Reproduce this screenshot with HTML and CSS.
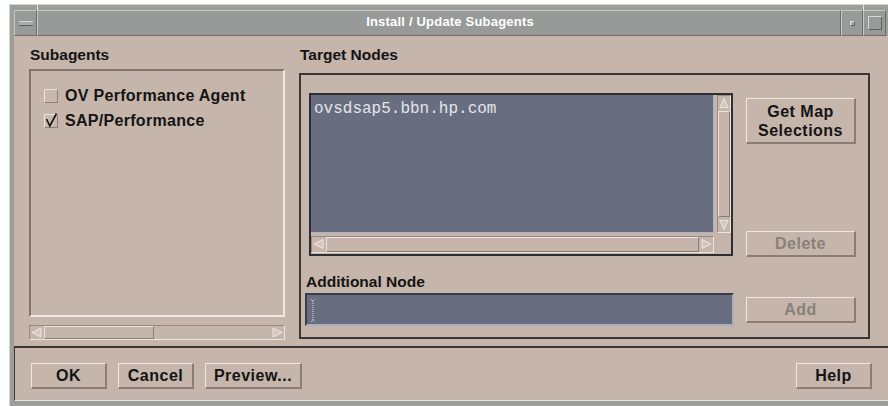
FILE: index.html
```html
<!DOCTYPE html>
<html lang="en">
<head>
<meta charset="utf-8">
<title>Install / Update Subagents</title>
<link rel="stylesheet" href="styles.css">
</head>
<body>
<div class="window">
  <span class="notch notch-tl"></span>
  <span class="notch notch-tr"></span>
  <div class="titlebar">
    <div class="tb-sec tb-menu"><span class="dash"></span></div>
    <div class="tb-sec tb-title">Install / Update Subagents</div>
    <div class="tb-sec tb-min"><span class="dot"></span></div>
    <div class="tb-sec tb-max"><span class="sq"></span></div>
  </div>
  <div class="client">
    <div class="content">
      <div class="col-left">
        <div class="label">Subagents</div>
        <div class="checklist">
          <div class="check-row"><span class="cb"></span><span>OV Performance Agent</span></div>
          <div class="check-row"><span class="cb"><svg class="tick" width="14" height="14" viewBox="0 0 14 14"><polyline points="2.5,5 5.8,12 12.5,-0.5" fill="none" stroke="#141414" stroke-width="1.6"/></svg></span><span>SAP/Performance</span></div>
        </div>
        <div class="hscroll">
          <span class="arrow"><svg width="13" height="13" viewBox="0 0 13 13"><polygon points="2,6.5 11,2 11,11" fill="#d3c7c0" stroke="#efe8e4" stroke-width="1"/></svg></span>
          <span class="thumb thumb-short"></span>
          <span class="trough"></span>
          <span class="arrow"><svg width="13" height="13" viewBox="0 0 13 13"><polygon points="11,6.5 2,2 2,11" fill="#d3c7c0" stroke="#efe8e4" stroke-width="1"/></svg></span>
        </div>
      </div>
      <div class="col-right">
        <div class="label">Target Nodes</div>
        <div class="group">
          <div class="g-main">
            <div class="scrolled">
              <div class="list-view"><div class="list-text">ovsdsap5.bbn.hp.com</div></div>
              <div class="vscroll">
                <span class="arrow"><svg width="13" height="14" viewBox="0 0 13 14"><polygon points="6.5,2 11,12 2,12" fill="#d3c7c0" stroke="#efe8e4" stroke-width="1"/></svg></span>
                <span class="thumb thumb-fill"></span>
                <span class="arrow"><svg width="13" height="14" viewBox="0 0 13 14"><polygon points="6.5,12 11,2 2,2" fill="#d3c7c0" stroke="#efe8e4" stroke-width="1"/></svg></span>
              </div>
              <div class="hscroll hscroll-list">
                <span class="arrow"><svg width="13" height="14" viewBox="0 0 13 14"><polygon points="2,7 11,2.5 11,11.5" fill="#d3c7c0" stroke="#efe8e4" stroke-width="1"/></svg></span>
                <span class="thumb thumb-fill"></span>
                <span class="arrow"><svg width="13" height="14" viewBox="0 0 13 14"><polygon points="11,7 2,2.5 2,11.5" fill="#d3c7c0" stroke="#efe8e4" stroke-width="1"/></svg></span>
              </div>
            </div>
            <div class="label sub-label">Additional Node</div>
            <div class="field">
              <svg class="ibeam" width="6" height="25" viewBox="0 0 6 25"><path d="M1 1 L3 3 L5 1 M3 3 V22 M1 24 L3 22 L5 24" fill="none" stroke="#e6e8ee" stroke-width="1" stroke-dasharray="1 1"/></svg>
            </div>
          </div>
          <div class="g-side">
            <button class="btn btn-map">Get Map<br>Selections</button>
            <button class="btn btn-delete" disabled>Delete</button>
            <button class="btn btn-add" disabled>Add</button>
          </div>
        </div>
      </div>
    </div>
    <div class="actions">
      <button class="btn btn-std">OK</button>
      <button class="btn btn-std">Cancel</button>
      <button class="btn btn-preview">Preview...</button>
      <button class="btn btn-std btn-help">Help</button>
    </div>
  </div>
</div>
</body>
</html>
```

FILE: styles.css
```css
html, body {
  margin: 0;
  padding: 0;
}

body {
  width: 888px;
  height: 406px;
  overflow: hidden;
  background: #ffffff;
  font-family: "Liberation Sans", Arial, sans-serif;
  color: #141414;
}

/* window manager frame */
.window {
  position: relative;
  margin: 4px 0 0 9px;
  width: 879px;
  height: 402px;
  box-sizing: border-box;
  background: #9c9e9c;
  border-top: 1px solid #d2d4d2;
  border-left: 1px solid #d2d4d2;
  padding: 5px 0 0 4px;
}

/* resize-handle notches in the frame */
.notch {
  position: absolute;
  top: -1px;
  width: 1px;
  height: 6px;
  background: #e2e4e2;
}
.notch-tl { left: 27px; }
.notch-tr { left: 853px; }

.titlebar {
  display: flex;
  height: 26px;
  margin-right: 2px;
}

.tb-sec {
  box-sizing: border-box;
  background: #979a98;
  border: 1px solid;
  border-color: #c6c8c6 #6c6e6c #6c6e6c #c6c8c6;
  display: flex;
  align-items: center;
  justify-content: center;
}

.tb-menu { width: 23px; }
.tb-min { width: 22px; }
.tb-max { width: 23px; }

.tb-title {
  flex: 1;
  color: #ffffff;
  font-weight: bold;
  font-size: 13px;
  letter-spacing: 0.2px;
  padding-left: 22px;
  padding-bottom: 3px;
}

.dash {
  width: 14px;
  height: 3px;
  background: #a9aba9;
  border-top: 1px solid #d6d8d6;
  border-bottom: 1px solid #5e605e;
}

.dot {
  width: 3px;
  height: 3px;
  background: #a9aba9;
  border: 1px solid;
  border-color: #dcdedc #5e605e #5e605e #dcdedc;
}

.sq {
  width: 12px;
  height: 12px;
  border: 1px solid;
  border-color: #d6d8d6 #5e605e #5e605e #d6d8d6;
}

/* dialog client area */
.client {
  height: 365px;
  background: #c5b5ab;
  display: flex;
  flex-direction: column;
}

.content {
  display: flex;
  gap: 14px;
  height: 310px;
  box-sizing: border-box;
  padding: 10px 18px 0 15px;
}

.label {
  font-weight: bold;
  font-size: 15.5px;
  line-height: 18px;
  height: 18px;
  padding-left: 1px;
}

.col-left {
  width: 256px;
  display: flex;
  flex-direction: column;
}

.col-right {
  width: 571px;
  display: flex;
  flex-direction: column;
}

.checklist {
  margin-top: 5px;
  height: 248px;
  box-sizing: border-box;
  border: 2px solid;
  border-color: #7f736c #efe7e2 #efe7e2 #7f736c;
  padding: 12px 0 0 13px;
}

.check-row {
  display: flex;
  align-items: center;
  gap: 7px;
  height: 25px;
  font-size: 16px;
  letter-spacing: 0.3px;
  font-weight: bold;
}

.cb {
  position: relative;
  width: 14px;
  height: 14px;
  box-sizing: border-box;
  border: 1px solid;
  border-color: #ebe3de #8d8079 #8d8079 #ebe3de;
  background: #c7b8ae;
}

.tick {
  position: absolute;
  left: -1px;
  top: -1px;
  overflow: visible;
}

/* scrollbars */
.hscroll {
  margin-top: 8px;
  height: 15px;
  display: flex;
  box-sizing: border-box;
  border: 1px solid;
  border-color: #978a82 #ebe3de #ebe3de #978a82;
  padding: 0;
}

.arrow {
  display: flex;
  flex: none;
}

.thumb {
  box-sizing: border-box;
  border: 1px solid;
  border-color: #ede5e0 #8a7d76 #8a7d76 #ede5e0;
  background: #c5b5ab;
  margin-left: 1px;
}

.thumb-short { width: 110px; }
.thumb-fill { flex: 1; margin-right: 1px; }
.trough { flex: 1; }

/* Target Nodes group */
.group {
  margin-top: 9px;
  height: 266px;
  box-sizing: border-box;
  border: 2px solid #3c3734;
  padding: 18px 12px 0 4px;
  display: grid;
  grid-template-columns: 429px 110px;
  column-gap: 12px;
}

.g-main {
  display: flex;
  flex-direction: column;
}

.scrolled {
  margin-left: 4px;
  width: 424px;
  height: 163px;
  box-sizing: border-box;
  border: 2px solid #2f2e33;
  display: grid;
  grid-template-columns: 403px 14px;
  grid-template-rows: 138px 17px;
  column-gap: 3px;
  row-gap: 3px;
}

.list-view {
  background: #686e80;
  border-right: 1px solid #aeb2bf;
  border-bottom: 1px solid #aeb2bf;
}

.list-text {
  font-family: "Liberation Mono", "Courier New", monospace;
  font-size: 16px;
  line-height: 18px;
  color: #e4e5e9;
  padding: 5px 0 0 3px;
}

.vscroll {
  display: flex;
  flex-direction: column;
  box-sizing: border-box;
  border: 1px solid;
  border-color: #978a82 #ebe3de #ebe3de #978a82;
}

.vscroll .thumb {
  margin: 1px 0;
}

.hscroll-list {
  margin-top: 0;
  height: 17px;
  grid-column: 1;
}

.sub-label {
  margin-top: 17px;
}

.field {
  margin-top: 2px;
  height: 33px;
  box-sizing: border-box;
  background: #686e80;
  border: 2px solid;
  border-color: #3a3d48 #a9aebb #a9aebb #3a3d48;
  padding: 3px 0 0 3px;
}

.ibeam {
  display: block;
}

.g-side {
  display: flex;
  flex-direction: column;
}

/* push buttons */
.btn {
  box-sizing: border-box;
  height: 26px;
  margin: 0;
  padding: 0;
  background: #c5b5ab;
  border-style: solid;
  border-width: 1px 2px 2px 1px;
  border-color: #efe7e2 #8a7d76 #8a7d76 #efe7e2;
  font-family: "Liberation Sans", Arial, sans-serif;
  font-weight: bold;
  font-size: 16px;
  letter-spacing: 0.5px;
  color: #141414;
  line-height: 18px;
}

.btn:disabled {
  color: #8a807a;
}

.btn-map {
  margin-top: 5px;
  height: 46px;
  line-height: 19px;
}

.btn-delete { margin-top: 87px; }
.btn-add { margin-top: 40px; }

.actions {
  flex: 1;
  display: flex;
  align-items: flex-start;
  gap: 11px;
  box-sizing: border-box;
  border-top: 2px solid #3a3634;
  border-left: 1px solid #3a3634;
  border-bottom: 1px solid #ece4df;
  padding: 15px 16px 0 16px;
}

.btn-std { width: 76px; }
.btn-preview { width: 97px; }
.btn-help { margin-left: auto; }
```
